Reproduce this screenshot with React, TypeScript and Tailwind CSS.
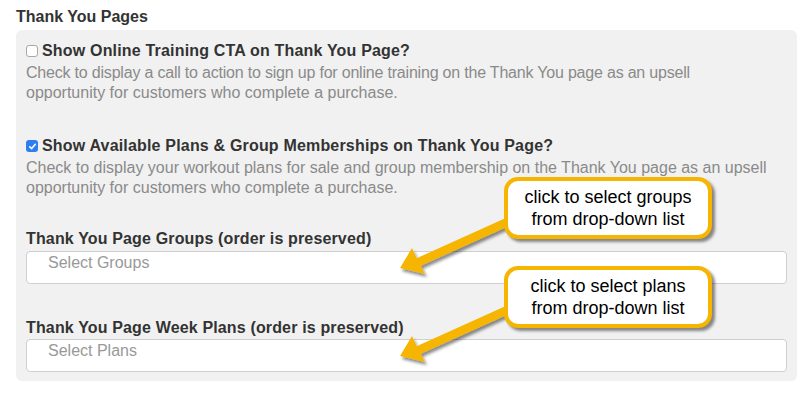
import React from "react"

function Checkbox({ checked }: { checked?: boolean }) {
  if (checked) {
    return (
      <span className="inline-flex h-[12px] w-[12px] shrink-0 items-center justify-center rounded-[3px] bg-[#2d7ef2]">
        <svg width="9" height="9" viewBox="0 0 9 9">
          <path d="M1.8 4.8 L3.7 6.6 L7.3 2.3" fill="none" stroke="#fff" strokeWidth="1.6" strokeLinecap="round" strokeLinejoin="round" />
        </svg>
      </span>
    )
  }
  return <span className="inline-block h-[12px] w-[12px] shrink-0 rounded-[3px] border border-[#a8a8a8] bg-white" />
}

function Callout({ top, lines }: { top: string; lines: string[] }) {
  return (
    <div
      className={`absolute left-[504px] ${top} flex h-[62px] w-[208px] flex-col items-center justify-center rounded-[14px] border-[4px] border-[#f6b500] bg-white text-[18px] leading-[22px] text-black shadow-[3px_3px_3px_rgba(0,0,0,0.45)]`}
    >
      {lines.map((l) => (
        <span key={l}>{l}</span>
      ))}
    </div>
  )
}

export default function App() {
  return (
    <div className="relative h-[396px] w-[806px] overflow-hidden bg-white font-['Liberation_Sans',Arial,sans-serif]">
      <h2 className="pl-[16px] pt-[7px] text-[16px] font-bold leading-[20px] text-[#333]">Thank You Pages</h2>

      <div className="ml-[16px] mr-[9px] mt-[3px] rounded-[6px] bg-[#f1f1f1] px-[10px] pb-[9px] pt-[10px]">
        <label className="flex items-center gap-[4px] text-[16px] font-bold leading-[22px] tracking-[0.18px] text-[#333]">
          <Checkbox />
          <span className="whitespace-nowrap">Show Online Training CTA on Thank You Page?</span>
        </label>
        <p className="mt-[1px] text-[16px] leading-[20px] text-[#8a8a8a]">
          <span className="block whitespace-nowrap tracking-[-0.2px]">
            Check to display a call to action to sign up for online training on the Thank You page as an upsell
          </span>
          <span className="block whitespace-nowrap">opportunity for customers who complete a purchase.</span>
        </p>

        <label className="mt-[32px] flex items-center gap-[4px] text-[16px] font-bold leading-[22px] tracking-[0.18px] text-[#333]">
          <Checkbox checked />
          <span className="whitespace-nowrap">Show Available Plans &amp; Group Memberships on Thank You Page?</span>
        </label>
        <p className="mt-[1px] text-[16px] leading-[20px] text-[#8a8a8a]">
          <span className="block whitespace-nowrap">
            Check to display your workout plans for sale and group membership on the Thank You page as an upsell
          </span>
          <span className="block whitespace-nowrap">opportunity for customers who complete a purchase.</span>
        </p>

        <div className="mt-[31px] text-[16px] font-bold leading-[20px] tracking-[0.15px] text-[#333]">
          Thank You Page Groups (order is preserved)
        </div>
        <div className="mt-[2px] h-[33px] rounded-[4px] border border-[#cfcfcf] bg-white pl-[21px] pt-[1px] text-[16px] leading-[20px] text-[#999]">
          Select Groups
        </div>

        <div className="mt-[34px] text-[16px] font-bold leading-[20px] tracking-[0.15px] text-[#333]">
          Thank You Page Week Plans (order is preserved)
        </div>
        <div className="mt-[1px] h-[33px] rounded-[4px] border border-[#cfcfcf] bg-white pl-[21px] pt-[1px] text-[16px] leading-[20px] text-[#999]">
          Select Plans
        </div>
      </div>

      <svg className="pointer-events-none absolute left-0 top-0" width="806" height="396" viewBox="0 0 806 396">
        <defs>
          <filter id="sh" x="-20%" y="-20%" width="140%" height="140%">
            <feDropShadow dx="2" dy="3" stdDeviation="1.5" floodColor="#000" floodOpacity="0.45" />
          </filter>
        </defs>
        <g fill="#f6b500" filter="url(#sh)">
          <polygon points="508,217 511,225 418,267 415,259" />
          <polygon points="400,268 412,248 417,259 425,274" />
          <polygon points="508,305 511,313 418,355 415,347" />
          <polygon points="400,356 412,336 417,347 425,362" />
        </g>
      </svg>

      <Callout top="top-[177px]" lines={["click to select groups", "from drop-down list"]} />
      <Callout top="top-[266px]" lines={["click to select plans", "from drop-down list"]} />
    </div>
  )
}
